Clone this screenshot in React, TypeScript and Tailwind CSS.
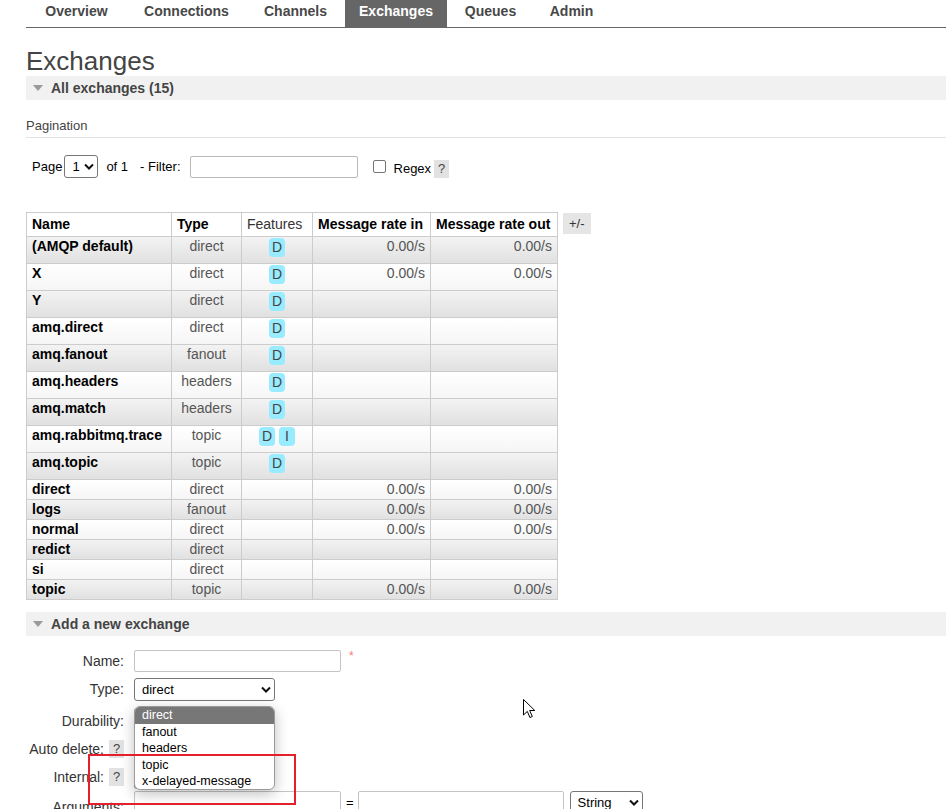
import React from 'react';

const tabs = [
  { label: 'Overview', w: 'w-[101px]' },
  { label: 'Connections', w: 'w-[119px]' },
  { label: 'Channels', w: 'w-[99px]' },
  { label: 'Exchanges', w: 'w-[102px]', active: true },
  { label: 'Queues', w: 'w-[87px]' },
  { label: 'Admin', w: 'w-[75px]' },
];

type Row = { name: string; type: string; features: string[]; rin?: string; rout?: string };

const rows: Row[] = [
  { name: '(AMQP default)', type: 'direct', features: ['D'], rin: '0.00/s', rout: '0.00/s' },
  { name: 'X', type: 'direct', features: ['D'], rin: '0.00/s', rout: '0.00/s' },
  { name: 'Y', type: 'direct', features: ['D'] },
  { name: 'amq.direct', type: 'direct', features: ['D'] },
  { name: 'amq.fanout', type: 'fanout', features: ['D'] },
  { name: 'amq.headers', type: 'headers', features: ['D'] },
  { name: 'amq.match', type: 'headers', features: ['D'] },
  { name: 'amq.rabbitmq.trace', type: 'topic', features: ['D', 'I'] },
  { name: 'amq.topic', type: 'topic', features: ['D'] },
  { name: 'direct', type: 'direct', features: [], rin: '0.00/s', rout: '0.00/s' },
  { name: 'logs', type: 'fanout', features: [], rin: '0.00/s', rout: '0.00/s' },
  { name: 'normal', type: 'direct', features: [], rin: '0.00/s', rout: '0.00/s' },
  { name: 'redict', type: 'direct', features: [] },
  { name: 'si', type: 'direct', features: [] },
  { name: 'topic', type: 'topic', features: [], rin: '0.00/s', rout: '0.00/s' },
];

function Chevron() {
  return (
    <svg width="10" height="7" viewBox="0 0 10 7" className="shrink-0">
      <path d="M1 1.5l4 4 4-4" fill="none" stroke="#111" strokeWidth="2" />
    </svg>
  );
}

function SectionBar({ title }: { title: string }) {
  return (
    <div className="flex items-center h-[24px] bg-[#f1f1f1]">
      <span className="ml-[7px] w-0 h-0 border-l-[5px] border-r-[5px] border-t-[6px] border-l-transparent border-r-transparent border-t-[#9a9a9a]" />
      <span className="ml-[8px] text-[14px] font-bold text-[#444]">{title}</span>
    </div>
  );
}

function Help() {
  return (
    <span className="inline-flex items-center justify-center w-[15px] h-[18px] bg-[#e2e2e2] text-[13px] text-[#444]">?</span>
  );
}

function Select({ value, w }: { value?: string; w: string }) {
  return (
    <div className={`${w} h-[23px] flex items-center justify-between border border-[#767676] rounded-[3px] bg-white pl-[7px] pr-[3px] text-[13px] text-black`}>
      <span>{value}</span>
      <Chevron />
    </div>
  );
}

export default function App() {
  return (
    <div className="relative w-[946px] h-[809px] overflow-hidden bg-white font-['Liberation_Sans',Arial,sans-serif] text-[#484848]">
      {/* top navigation */}
      <nav className="flex ml-[26px] h-[28px] border-b border-[#666]">
        {tabs.map((t) => (
          <div
            key={t.label}
            className={`${t.w} h-[27px] flex items-center justify-center pb-[4px] text-[14px] font-bold ${t.active ? 'bg-[#666] text-white' : 'text-[#484848]'}`}
          >
            {t.label}
          </div>
        ))}
      </nav>

      <main className="ml-[26px]">
        <h1 className="mt-[18px] text-[26px] leading-[30px] text-[#444]">Exchanges</h1>
        <SectionBar title="All exchanges (15)" />

        <div className="mt-[18px] pb-[3px] border-b border-[#e0e0e0] text-[13px] leading-[16px] text-[#444]">Pagination</div>

        <div className="mt-[17px] ml-[6px] flex items-center h-[23px] text-[13px] text-black">
          <span>Page</span>
          <div className="ml-[2px]">
            <Select value="1" w="w-[34px]" />
          </div>
          <span className="ml-[8px]">of 1</span>
          <span className="ml-[12px]">- Filter:</span>
          <div className="ml-[9px] w-[168px] h-[22px] border border-[#b9b9b9] rounded-[2px]" />
          <span className="ml-[15px] w-[13px] h-[13px] border border-[#767676] rounded-[2px]" />
          <span className="ml-[8px] mt-[4px]">Regex</span>
          <span className="ml-[3px] mt-[4px]"><Help /></span>
        </div>

        <div className="mt-[34px] flex items-start gap-[5px]">
          <table className="table-fixed border-collapse w-[531px] text-[14px]">
            <colgroup>
              <col className="w-[145px]" />
              <col className="w-[70px]" />
              <col className="w-[71px]" />
              <col className="w-[118px]" />
              <col className="w-[127px]" />
            </colgroup>
            <thead>
              <tr className="h-[24px] bg-white text-black">
                <th className="border border-[#ccc] px-[5px] text-left font-bold">Name</th>
                <th className="border border-[#ccc] px-[5px] text-left font-bold">Type</th>
                <th className="border border-[#ccc] px-[5px] text-left font-normal text-[#333]">Features</th>
                <th className="border border-[#ccc] px-[5px] text-left font-bold">Message rate in</th>
                <th className="border border-[#ccc] px-[5px] text-left font-bold">Message rate out</th>
              </tr>
            </thead>
            <tbody>
              {rows.map((r, i) => (
                <tr
                  key={r.name}
                  className={i % 2 === 0 ? 'bg-linear-to-b from-[#f3f3f3] to-[#e0e0e0]' : 'bg-linear-to-b from-white to-[#f5f5f5]'}
                >
                  <td className="border border-[#ccc] px-[5px] align-top leading-[19px] font-bold text-black whitespace-nowrap">{r.name}</td>
                  <td className="border border-[#ccc] px-[5px] align-top leading-[19px] text-center text-[#555]">{r.type}</td>
                  <td className="border border-[#ccc] px-[5px] align-top leading-[19px]">
                    {r.features.length > 0 && (
                      <div className="h-[26px] pt-[1px] flex justify-center gap-[4px]">
                        {r.features.map((f) => (
                          <span key={f} className="h-[19px] px-[3px] min-w-[16px] flex items-center justify-center rounded-[4px] bg-[#99ebff] text-[#444]">
                            {f}
                          </span>
                        ))}
                      </div>
                    )}
                  </td>
                  <td className="border border-[#ccc] px-[5px] align-top leading-[19px] text-right text-[#555]">{r.rin}</td>
                  <td className="border border-[#ccc] px-[5px] align-top leading-[19px] text-right text-[#555]">{r.rout}</td>
                </tr>
              ))}
            </tbody>
          </table>
          <span className="mt-[1px] h-[21px] px-[6px] flex items-center bg-[#e5e5e5] text-[13px] text-[#333]">+/-</span>
        </div>

        <div className="mt-[12px]">
          <SectionBar title="Add a new exchange" />
        </div>

        {/* add exchange form */}
        <div className="text-[14px] text-[#333]">
          <div className="mt-[14px] flex items-center h-[22px]">
            <div className="w-[98px] flex justify-end">Name:</div>
            <div className="ml-[10px] w-[207px] h-[22px] border border-[#c4c4c4] rounded-[2px]" />
            <span className="ml-[8px] -mt-[10px] text-[12px] text-[#f77]">*</span>
          </div>
          <div className="mt-[6px] flex items-center h-[23px]">
            <div className="w-[98px] flex justify-end">Type:</div>
            <div className="ml-[10px]">
              <Select value="direct" w="w-[141px]" />
            </div>
          </div>
          <div className="mt-[6px] flex items-center h-[24px]">
            <div className="w-[98px] flex justify-end pt-[4px]">Durability:</div>
            <div className="ml-[10px]">
              <Select w="w-[82px]" />
            </div>
          </div>
          <div className="mt-[7px] flex items-center h-[22px]">
            <div className="w-[98px] flex justify-end items-center gap-[5px]">
              <span>Auto delete:</span>
              <Help />
            </div>
            <div className="ml-[10px]">
              <Select w="w-[50px]" />
            </div>
          </div>
          <div className="mt-[6px] flex items-center h-[22px]">
            <div className="w-[98px] flex justify-end items-center gap-[5px]">
              <span>Internal:</span>
              <Help />
            </div>
            <div className="ml-[10px]">
              <Select w="w-[50px]" />
            </div>
          </div>
          <div className="mt-[3px] flex items-start h-[22px]">
            <div className="w-[98px] flex justify-end pt-[6px]">Arguments:</div>
            <div className="ml-[10px] w-[207px] h-[22px] border border-[#c4c4c4] rounded-[2px]" />
            <span className="ml-[5px] mt-[2px] text-[13px] text-black">=</span>
            <div className="ml-[4px] w-[206px] h-[22px] border border-[#c4c4c4] rounded-[2px]" />
            <div className="ml-[6px]">
              <Select value="String" w="w-[73px]" />
            </div>
          </div>
        </div>
      </main>

      {/* open dropdown of the Type select */}
      <div className="absolute left-[134px] top-[706px] w-[141px] h-[84px] bg-white border border-[#9a9a9a] rounded-[6px] overflow-hidden shadow-[0_4px_14px_rgba(0,0,0,0.25)] text-[12.5px] leading-[16.5px] text-black">
        <div className="px-[7px] bg-[#777] text-white">direct</div>
        <div className="px-[7px]">fanout</div>
        <div className="px-[7px]">headers</div>
        <div className="px-[7px]">topic</div>
        <div className="px-[7px]">x-delayed-message</div>
      </div>

      {/* highlight box */}
      <div className="absolute left-[88px] top-[754px] w-[208px] h-[51px] border-2 border-[#e3202b]" />

      {/* mouse pointer */}
      <svg className="absolute left-[523px] top-[699px]" width="13" height="20" viewBox="0 0 13 20">
        <path d="M0.5 0.5v15.5l3.8-3.6 2.6 6.1 2.4-1-2.6-6h5.1z" fill="white" stroke="black" strokeWidth="1" strokeLinejoin="round" />
      </svg>
    </div>
  );
}
